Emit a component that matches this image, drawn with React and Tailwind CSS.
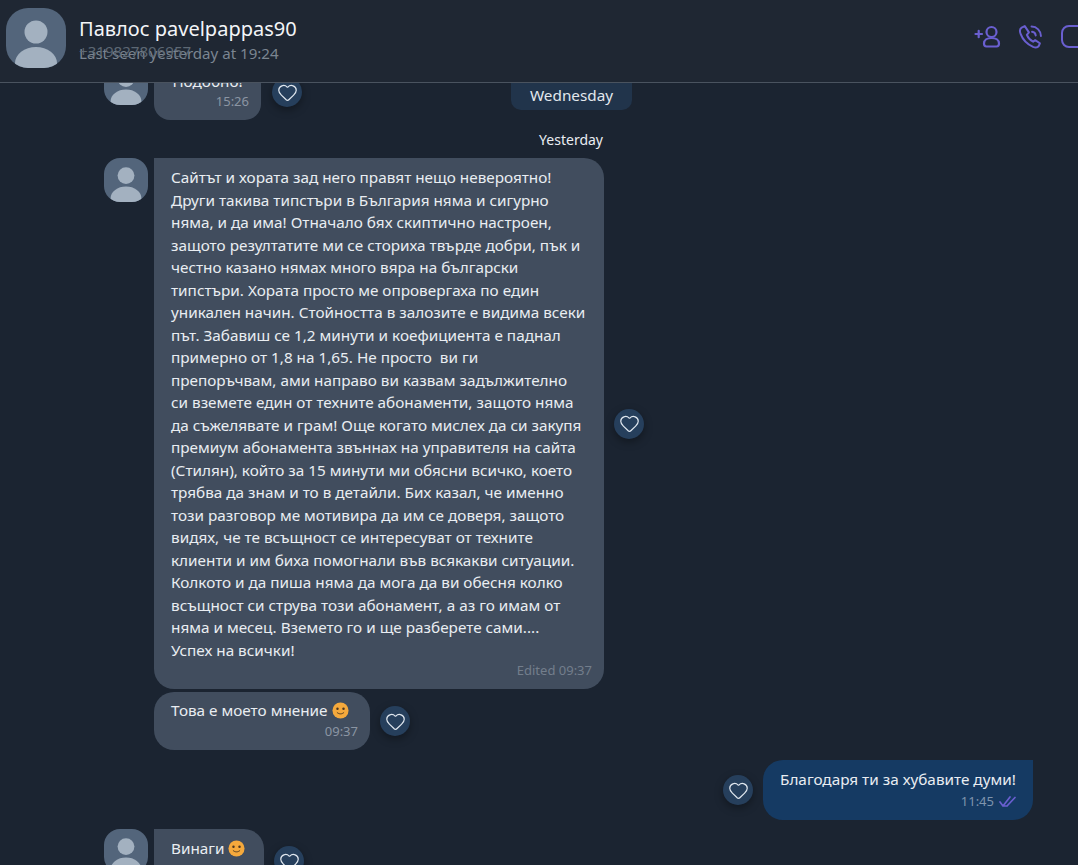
import React from 'react';
import { Heart } from 'lucide-react';

const longText = [
  'Сайтът и хората зад него правят нещо невероятно!',
  'Други такива типстъри в България няма и сигурно',
  'няма, и да има! Отначало бях скиптично настроен,',
  'защото резултатите ми се сториха твърде добри, пък и',
  'честно казано нямах много вяра на български',
  'типстъри. Хората просто ме опровергаха по един',
  'уникален начин. Стойността в залозите е видима всеки',
  'път. Забавиш се 1,2 минути и коефициента е паднал',
  'примерно от 1,8 на 1,65. Не просто  ви ги',
  'препоръчвам, ами направо ви казвам задължително',
  'си вземете един от техните абонаменти, защото няма',
  'да съжелявате и грам! Още когато мислех да си закупя',
  'премиум абонамента звъннах на управителя на сайта',
  '(Стилян), който за 15 минути ми обясни всичко, което',
  'трябва да знам и то в детайли. Бих казал, че именно',
  'този разговор ме мотивира да им се доверя, защото',
  'видях, че те всъщност се интересуват от техните',
  'клиенти и им биха помогнали във всякакви ситуации.',
  'Колкото и да пиша няма да мога да ви обесня колко',
  'всъщност си струва този абонамент, а аз го имам от',
  'няма и месец. Вземето го и ще разберете сами....',
  'Успех на всички!',
];

function Avatar({ big }) {
  return (
    <div className={big ? 'w-[60px] h-[60px] rounded-[22px] overflow-hidden bg-[#53657b] shrink-0' : 'w-[44px] h-[44px] rounded-[16px] overflow-hidden bg-[#53657b] shrink-0'}>
      <svg viewBox="0 0 60 60" className="w-full h-full">
        <circle cx="30" cy="24" r="11.5" fill="#a3b1c0" />
        <ellipse cx="30" cy="55" rx="21" ry="16" fill="#a3b1c0" />
      </svg>
    </div>
  );
}

function Like({ className }) {
  return (
    <button className={'w-[30px] h-[30px] rounded-full bg-[#263f5c] shadow-[0_3px_8px_rgba(0,0,0,0.35)] flex items-center justify-center shrink-0 ' + className}>
      <Heart className="w-[21px] h-[21px] text-[#dfe6ee]" strokeWidth={1.4} />
    </button>
  );
}

function Smile({ className }) {
  return (
    <svg viewBox="0 0 18 18" className={'inline-block w-[17px] h-[17px] align-[-3px] ' + className}>
      <circle cx="9" cy="9" r="8.5" fill="#f5a93c" />
      <circle cx="5.8" cy="7.2" r="1.3" fill="#4a3520" />
      <circle cx="12.2" cy="7.2" r="1.3" fill="#4a3520" />
      <path d="M5.5 11.2c1.8 1.9 5.2 1.9 7 0" fill="none" stroke="#4a3520" strokeWidth="1" strokeLinecap="round" />
    </svg>
  );
}

export default function App() {
  return (
    <div className="w-[1078px] h-[865px] overflow-hidden bg-[#1b2431] text-[#e9edf2] font-['Noto_Sans',sans-serif] text-[15.3px] leading-[22.5px]">
      <header className="h-[83px] bg-[#1f2733] border-b border-[#4a535f] flex items-start relative z-10">
        <div className="ml-[6px] mt-[8px]">
          <Avatar big />
        </div>
        <div className="ml-[13px] mt-[15px] relative">
          <div className="text-[20px] leading-[27px] text-[#f3f5f8] whitespace-nowrap">Павлос pavelpappas90</div>
          <div className="relative text-[15.1px] leading-[20px] mt-[1px] text-[#7b8591] whitespace-nowrap">
            Last seen yesterday at 19:24
            <span className="absolute left-0 -top-[2px] text-[#5d6874]">+319827806957</span>
          </div>
        </div>
        <div className="ml-auto mt-[25px] flex items-start gap-[16px] text-[#6a5fd0]">
          <svg viewBox="0 0 28 23" className="w-[28px] h-[23px]" fill="none" stroke="currentColor" strokeWidth="2.200" strokeLinecap="round" strokeLinejoin="round">
            <path d="M1.500 9h6.500M4.700 5.800v6.400" />
            <circle cx="17.500" cy="7" r="5" />
            <path d="M10 18.500c0-3.500 3.300-5.500 7.500-5.500s7.500 2 7.500 5.500c0 2-1 3-2.500 3h-10c-1.500 0-2.500-1-2.500-3z" />
          </svg>
          <svg viewBox="0 0 24 24" className="w-[25px] h-[25px] -mt-[1px]" fill="none" stroke="currentColor" strokeWidth="1.900" strokeLinecap="round" strokeLinejoin="round">
            <path d="M6.500 2 3.500 3.500C2 4.500 1.500 7 2.500 9.500 4.500 15 9 19.500 14.500 22c2.500 1 4.500.5 5.500-1l1-2.500-4.500-3-2 1.500c-2-1-5-4-6-6.500L10.500 8z" />
            <path d="M13.500 7.500a4 4 0 0 1 3.500 3.500M13 2.500a9 9 0 0 1 9 9" />
          </svg>
          <div className="w-[30px] h-[23px] ml-[2px] -mr-[13px] border-2 border-[#6a5fd0] rounded-[8px] shrink-0" />
        </div>
      </header>

      <main className="relative h-[782px] overflow-hidden pl-[104px]">
        <div className="absolute left-[511px] -top-[2px] w-[121px] h-[29px] rounded-b-[10px] bg-[#21344b] flex items-center justify-center text-[#e3e8ee] z-[1]">
          Wednesday
        </div>

        <div className="flex items-end -mt-[20px] h-[57px]">
          <div className="mb-[15px]"><Avatar /></div>
          <div className="ml-[6px] w-[107px] h-[57px] bg-[#414d5e] rounded-b-[16px] relative text-center pt-[7px]">
            Подобно!
            <span className="absolute right-[12px] bottom-[9px] text-[13px] leading-[20px] text-[#8b95a3]">15:26</span>
          </div>
          <Like className="ml-[11px] mb-[13px]" />
        </div>

        <div className="w-[499px] text-right text-[14px] leading-[20px] mt-[10px]">Yesterday</div>

        <div className="flex items-center mt-[8px]">
          <div className="self-start"><Avatar /></div>
          <div className="ml-[6px] w-[450px] h-[531px] bg-[#414d5e] rounded-r-[20px] rounded-bl-[20px] pl-[17px] pt-[8px] relative whitespace-pre">
            {longText.map((line, i) => <div key={i}>{line}</div>)}
            <span className="absolute right-[12px] bottom-[9px] text-[13px] leading-[20px] text-[#737e8c]">Edited 09:37</span>
          </div>
          <Like className="ml-[10px]" />
        </div>

        <div className="flex items-center mt-[3px] pl-[50px]">
          <div className="w-[216px] h-[58px] bg-[#414d5e] rounded-[20px] pl-[17px] pt-[7px] relative">
            Това е моето мнение<Smile className="ml-[4px]" />
            <span className="absolute right-[12px] bottom-[9px] text-[13px] leading-[20px] text-[#8b95a3]">09:37</span>
          </div>
          <Like className="ml-[10px]" />
        </div>

        <div className="flex items-center justify-end mt-[10px] pr-[45px]">
          <Like className="mr-[10px]" />
          <div className="w-[270px] h-[60px] bg-[#153a63] rounded-l-[20px] rounded-br-[20px] pl-[17px] pt-[8px] relative">
            Благодаря ти за хубавите думи!
            <span className="absolute right-[39px] bottom-[9px] text-[13px] leading-[20px] text-[#7f94ad]">11:45</span>
            <svg viewBox="0 0 20 11" className="absolute right-[14px] bottom-[13px] w-[20px] h-[11px]" fill="none" stroke="#6a5fd0" strokeWidth="1.700" strokeLinecap="round" strokeLinejoin="round">
              <path d="M1 6l3 4L11 1M8 10 16 1.500M5.500 10h2.500" />
            </svg>
          </div>
        </div>

        <div className="flex items-start mt-[9px]">
          <Avatar />
          <div className="ml-[6px] w-[110px] h-[58px] bg-[#414d5e] rounded-r-[20px] pl-[17px] pt-[8px]">
            Винаги <Smile className="-ml-[1px]" />
          </div>
          <Like className="ml-[10px] mt-[17px]" />
        </div>
      </main>
    </div>
  );
}
